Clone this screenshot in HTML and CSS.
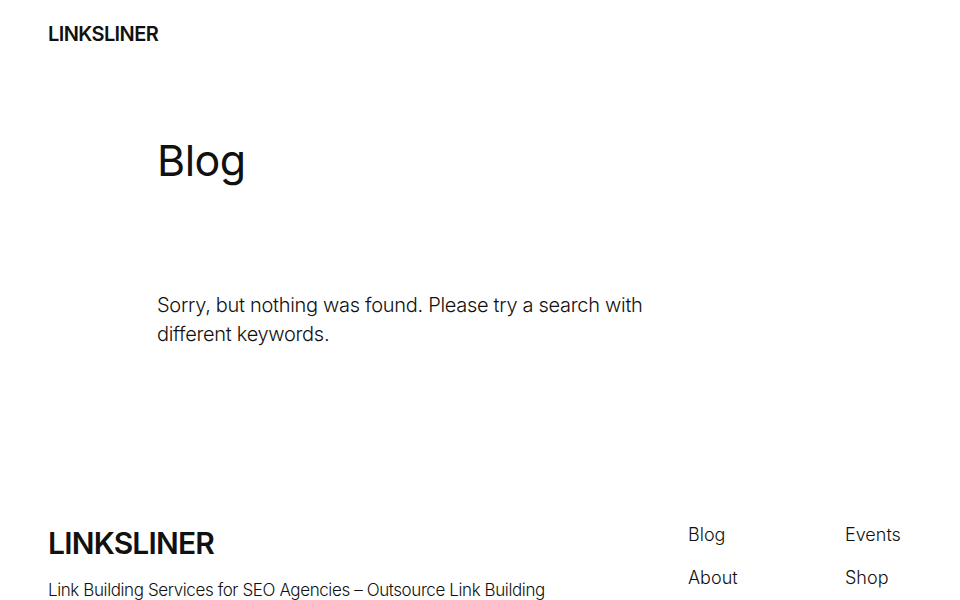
FILE: index.html
```html
<!DOCTYPE html>
<html lang="en">
<head>
    <meta charset="UTF-8">
    <meta name="viewport" content="width=device-width, initial-scale=1.0">
    <title>Blog – LINKSLINER</title>
    <link rel="stylesheet" href="styles.css">
</head>
<body>
    <header class="site-header">
        <a class="site-title" href="#">LINKSLINER</a>
    </header>

    <main class="site-main">
        <h1 class="page-title">Blog</h1>
        <p class="no-results">Sorry, but nothing was found. Please try a search with different keywords.</p>
    </main>

    <footer class="site-footer">
        <div class="footer-brand">
            <a class="footer-title" href="#">LINKSLINER</a>
            <p class="tagline">Link Building Services for SEO Agencies – Outsource Link Building</p>
        </div>
        <nav class="footer-nav">
            <ul>
                <li><a href="#">Blog</a></li>
                <li><a href="#">About</a></li>
            </ul>
            <ul>
                <li><a href="#">Events</a></li>
                <li><a href="#">Shop</a></li>
            </ul>
        </nav>
    </footer>
</body>
</html>
```

FILE: styles.css
```css
body {
    margin: 0;
    font-family: Inter, "Noto Sans", sans-serif;
    color: #111111;
    background: #ffffff;
}
a {
    color: inherit;
    text-decoration: none;
}
.site-header {
    padding: 20px 48px 0;
    height: 40px;
}
.site-title {
    font-size: 20px;
    line-height: 28px;
    font-weight: 600;
    letter-spacing: -0.6px;
}
.site-main {
    width: 646px;
    margin: 0 auto;
    padding-top: 74px;
    height: 391px;
}
.page-title {
    margin: 0;
    font-size: 43px;
    line-height: 52px;
    font-weight: 400;
    letter-spacing: -0.5px;
}
.no-results {
    margin: 105px 0 0;
    max-width: 500px;
    font-size: 20px;
    line-height: 29px;
    font-weight: 300;
    letter-spacing: -0.3px;
}
.site-footer {
    display: flex;
    justify-content: space-between;
    padding: 0 48px;
}
.footer-title {
    display: block;
    font-size: 30px;
    line-height: 36px;
    font-weight: 600;
    letter-spacing: -0.8px;
}
.tagline {
    margin: 17px 0 0;
    font-size: 17px;
    line-height: 24px;
    font-weight: 300;
    letter-spacing: -0.4px;
}
.footer-nav {
    display: grid;
    grid-template-columns: 157px 1fr;
    width: 224px;
    margin-top: -4px;
}
.footer-nav ul {
    list-style: none;
    margin: 0;
    padding: 0;
    display: flex;
    flex-direction: column;
    gap: 16px;
}
.footer-nav li {
    font-size: 18px;
    line-height: 27px;
    font-weight: 300;
}
```
